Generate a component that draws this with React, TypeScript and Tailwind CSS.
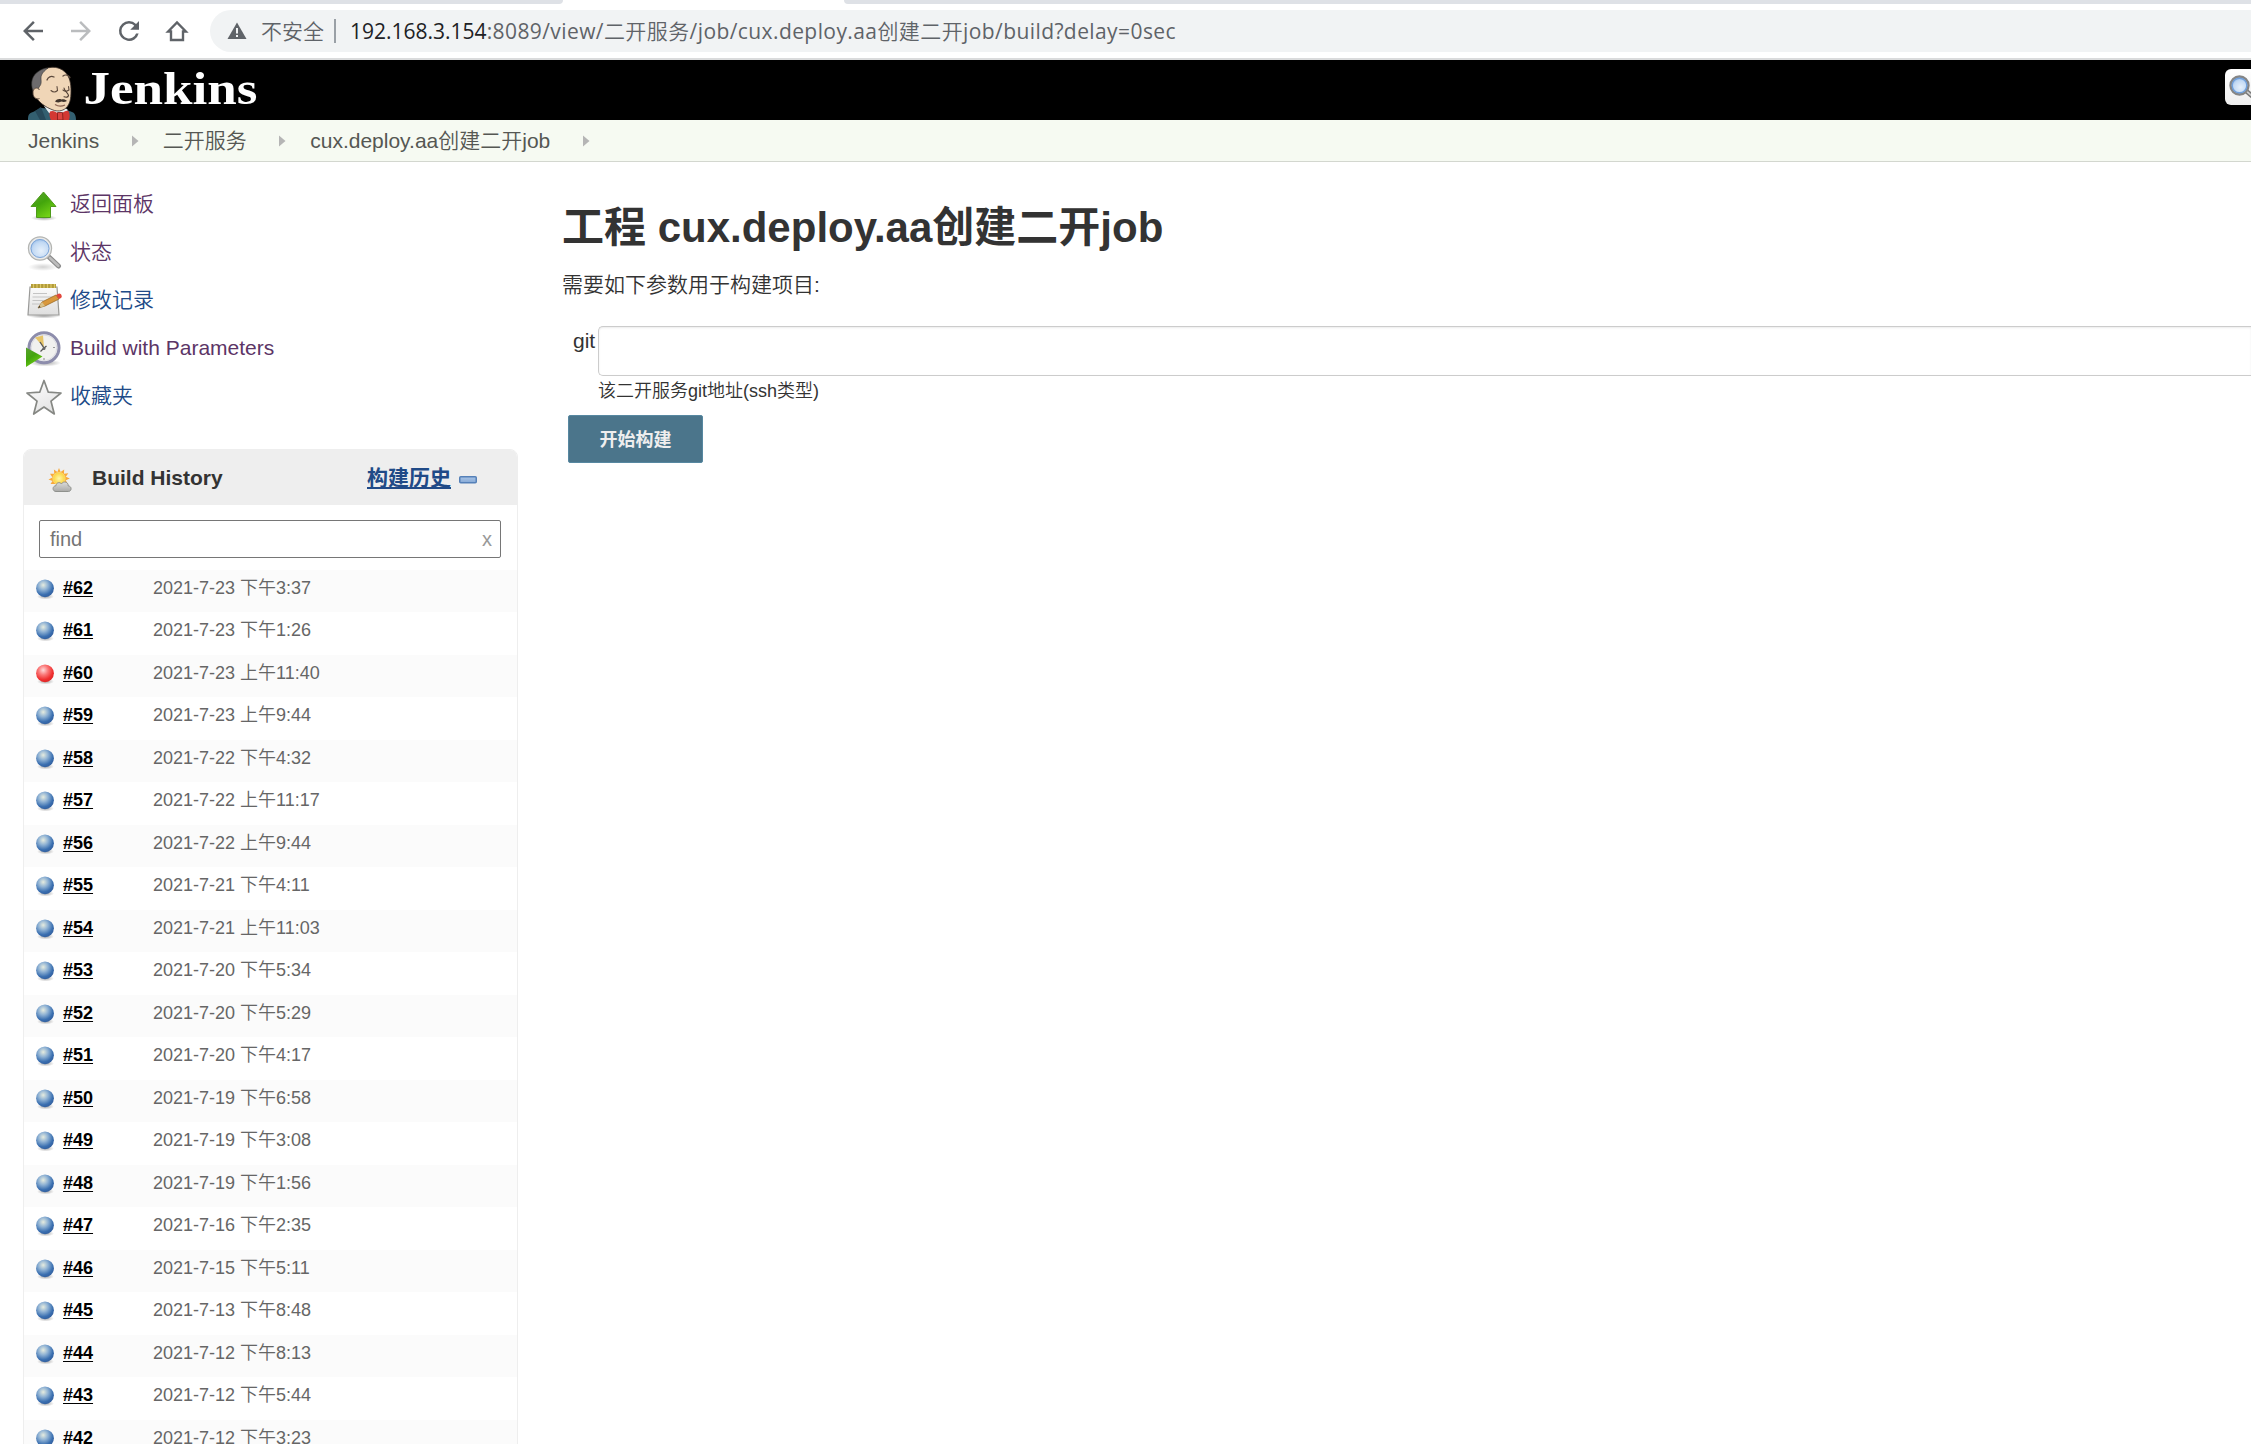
import type { ReactNode } from "react";

const CJK_SANS = "font-['Liberation_Sans','Noto_Sans_CJK_SC',sans-serif]";

type Build = { id: number; time: string; failed?: boolean };

const builds: Build[] = [
  { id: 62, time: "2021-7-23 下午3:37" },
  { id: 61, time: "2021-7-23 下午1:26" },
  { id: 60, time: "2021-7-23 上午11:40", failed: true },
  { id: 59, time: "2021-7-23 上午9:44" },
  { id: 58, time: "2021-7-22 下午4:32" },
  { id: 57, time: "2021-7-22 上午11:17" },
  { id: 56, time: "2021-7-22 上午9:44" },
  { id: 55, time: "2021-7-21 下午4:11" },
  { id: 54, time: "2021-7-21 上午11:03" },
  { id: 53, time: "2021-7-20 下午5:34" },
  { id: 52, time: "2021-7-20 下午5:29" },
  { id: 51, time: "2021-7-20 下午4:17" },
  { id: 50, time: "2021-7-19 下午6:58" },
  { id: 49, time: "2021-7-19 下午3:08" },
  { id: 48, time: "2021-7-19 下午1:56" },
  { id: 47, time: "2021-7-16 下午2:35" },
  { id: 46, time: "2021-7-15 下午5:11" },
  { id: 45, time: "2021-7-13 下午8:48" },
  { id: 44, time: "2021-7-12 下午8:13" },
  { id: 43, time: "2021-7-12 下午5:44" },
  { id: 42, time: "2021-7-12 下午3:23" },
];

/* Gradients shared by all icons */
function Gradients() {
  return (
    <svg className="absolute h-0 w-0" aria-hidden="true">
      <defs>
        <radialGradient id="ballBlue" cx="0.4" cy="0.32" r="0.68">
          <stop offset="0" stopColor="#e6ecdf" />
          <stop offset="0.4" stopColor="#8fb2d4" />
          <stop offset="0.8" stopColor="#3a6fb0" />
          <stop offset="1" stopColor="#3461a0" />
        </radialGradient>
        <radialGradient id="ballRed" cx="0.4" cy="0.32" r="0.68">
          <stop offset="0" stopColor="#ffd9d9" />
          <stop offset="0.4" stopColor="#fa7878" />
          <stop offset="0.8" stopColor="#ef2f2f" />
          <stop offset="1" stopColor="#e02828" />
        </radialGradient>
        <linearGradient id="green" x1="0" y1="0" x2="0.6" y2="1">
          <stop offset="0" stopColor="#5aa033" />
          <stop offset="0.5" stopColor="#43a50c" />
          <stop offset="1" stopColor="#73d216" />
        </linearGradient>
        <radialGradient id="lens" cx="0.55" cy="0.6" r="0.6">
          <stop offset="0" stopColor="#e6f0fb" />
          <stop offset="0.6" stopColor="#c3daf4" />
          <stop offset="1" stopColor="#8db5e6" />
        </radialGradient>
        <linearGradient id="paper" x1="0" y1="0" x2="0" y2="1">
          <stop offset="0" stopColor="#fbfbfb" />
          <stop offset="1" stopColor="#dedede" />
        </linearGradient>
        <linearGradient id="star" x1="0" y1="0" x2="0.5" y2="1">
          <stop offset="0" stopColor="#ffffff" />
          <stop offset="1" stopColor="#e4e4e4" />
        </linearGradient>
        <radialGradient id="shade">
          <stop offset="0" stopColor="#000" stopOpacity="0.35" />
          <stop offset="1" stopColor="#000" stopOpacity="0" />
        </radialGradient>
        <radialGradient id="sun">
          <stop offset="0" stopColor="#fff6a5" />
          <stop offset="1" stopColor="#fbd23c" />
        </radialGradient>
        <linearGradient id="cloud" x1="0" y1="0" x2="0" y2="1">
          <stop offset="0" stopColor="#dcdcda" />
          <stop offset="1" stopColor="#a9a9a7" />
        </linearGradient>
        <linearGradient id="minus" x1="0" y1="0" x2="0" y2="1">
          <stop offset="0" stopColor="#a9c4e6" />
          <stop offset="1" stopColor="#86a9d6" />
        </linearGradient>
      </defs>
    </svg>
  );
}

function NavIcon({ color, children }: { color: string; children: ReactNode }) {
  return (
    <svg viewBox="0 0 24 24" className="h-[30px] w-[30px] shrink-0" fill={color}>
      {children}
    </svg>
  );
}

function BrowserBar() {
  return (
    <div className="h-[60px] border-b-2 border-[#dadbdc] bg-white">
      <div className="flex h-1 justify-between">
        <div className="w-[563px] rounded-br-[4px] bg-[#dee1e6]" />
        <div className="w-[1407px] rounded-bl-[4px] bg-[#dee1e6]" />
      </div>
      <div className="flex items-center gap-[18px] pt-[6px] pl-[18px]">
        <NavIcon color="#5f6368">
          <path d="M20 11H7.83l5.59-5.59L12 4l-8 8 8 8 1.41-1.41L7.83 13H20v-2z" />
        </NavIcon>
        <NavIcon color="#babcbe">
          <path d="M12 4l-1.41 1.41L16.17 11H4v2h12.17l-5.58 5.59L12 20l8-8z" />
        </NavIcon>
        <NavIcon color="#5f6368">
          <path d="M17.65 6.35A7.96 7.96 0 0 0 12 4a8 8 0 1 0 7.73 10h-2.08A6 6 0 1 1 12 6c1.66 0 3.14.69 4.22 1.78L13 11h7V4l-2.35 2.35z" />
        </NavIcon>
        <NavIcon color="none">
          <path d="M4.9 12.4 12 5.2l7.1 7.2h-2.3v6.8H7.2v-6.8z" stroke="#5f6368" strokeWidth="1.9" />
        </NavIcon>
        <div className="flex h-[42px] flex-1 items-center rounded-l-full bg-[#f1f3f4] pl-[17px] font-['Open_Sans','Noto_Sans_CJK_SC',sans-serif] text-[21px] leading-[42px] font-normal whitespace-nowrap text-[#5f6368]">
          <svg viewBox="0 0 20 18" className="h-[18px] w-5 shrink-0">
            <path d="M10 0.5 19.5 17H0.5z" fill="#5f6368" />
            <path d="M9 6h2v5.5H9zM9 13h2v2H9z" fill="#f1f3f4" />
          </svg>
          <span className="ml-[14px] font-[350]">不安全</span>
          <div className="mr-[14px] ml-[10px] h-6 w-[2px] bg-[#9aa0a6]" />
          <span className="text-[#202124]">192.168.3.154</span>
          <span className="tracking-[0.41px]">
            :8089/view/<span className="font-[350]">二开服务</span>/job/cux.deploy.aa
            <span className="font-[350]">创建二开</span>job/build?delay=0sec
          </span>
        </div>
      </div>
    </div>
  );
}

function Butler() {
  return (
    <svg viewBox="0 0 50 54" className="h-[54px] w-[50px]">
      <path d="M0 54c0-5 1-7 5-8l8-4 26 2 5 2c3 1 4 4 4 8z" fill="#335f70" />
      <path d="M13 41l5 13h-6l-5-9z" fill="#27495a" />
      <path d="M16 40l5 7 12 3 7-6-5-4z" fill="#e9edf0" />
      <path d="M7 29C4 21 4 13 10 7c8-7 20-8 27-1 5 5 6 12 6 19 0 8-1 13-5 17-4 3.5-9 3.5-13 2-8-3-15-8-18-15z" fill="#f0d6b7" stroke="#3a2e27" strokeWidth="0.8" />
      <path d="M5 25C2 17 4 9 11 5c3-2 6-3 9-3-4 3-7 6-7 10 0 3 1 6-2 9l-1 4z" fill="#6d6b6d" stroke="#333" strokeWidth="0.6" />
      <path d="M11.5 24c-2-3.5-7-2-6.5 3 0 4 3 7 6.5 5.5" fill="#f0d6b7" stroke="#5a463a" strokeWidth="0.9" />
      <path d="M19 14c1-3 4-4.5 7-3M35 10c2-1.5 5-1 7 1.5" fill="none" stroke="#5d4a3d" strokeWidth="1.3" strokeLinecap="round" />
      <path d="M23 24.5c2 1.8 4.5 1.8 6.5 0l-.5-4M35 24c1.5 1.5 4 1.5 6 0l-.5-3.5" fill="none" stroke="#5d4a3d" strokeWidth="1.1" strokeLinecap="round" />
      <path d="M36 22c.5 3 4 5 4.5 7.5-.5 2-2.5 2-4.5 1.3" fill="none" stroke="#4f3d32" strokeWidth="1.1" strokeLinecap="round" />
      <path d="M27 35.5c2-2.5 4-3 6.5-2 2-.5 4 0 5.5 1.5-2 1.2-4 1.2-5.5.6-2 1.2-4.5 1-6.5-.1z" fill="#40342c" />
      <path d="M27 38.5c3 2 7 2 10 .5" fill="none" stroke="#8c6453" strokeWidth="1.2" />
      <path d="M22 45.5c3-1.5 6 .5 8 2h4c2-2 4-3 6.5-2.5 1.5 3 1.5 6 .5 9H23c-1.5-2.5-2-6-1-8.5z" fill="#d33833" />
      <path d="M29.5 46.5h5l.5 7.5h-5.5z" fill="#dd4440" stroke="#7e1c19" strokeWidth="0.8" />
    </svg>
  );
}

function SearchIcon({ className }: { className: string }) {
  return (
    <svg viewBox="0 0 36 36" className={className}>
      <ellipse cx="17" cy="32" rx="15" ry="4" fill="url(#shade)" opacity="0.5" />
      <path d="M23.5 22.5l9 8.5" stroke="#8c8c8c" strokeWidth="5" strokeLinecap="round" />
      <path d="M24 23l8.3 7.8" stroke="#bdbdbd" strokeWidth="2.6" strokeLinecap="round" />
      <circle cx="14" cy="13.5" r="11.4" fill="url(#lens)" stroke="#b4b5b2" strokeWidth="1.6" />
      <circle cx="14" cy="13.5" r="10.2" fill="none" stroke="#e9e9e8" strokeWidth="1.6" />
      <circle cx="14" cy="13.5" r="9" fill="none" stroke="#7fa6d8" strokeWidth="1" />
    </svg>
  );
}

function Header() {
  return (
    <header className="flex h-[60px] items-start justify-between bg-black">
      <div className="flex pt-[6px] pl-[28px]">
        <Butler />
        <svg viewBox="0 0 180 54" className="ml-[5px] h-[54px] w-[180px]">
          <text x="0.5" y="37.5" fontSize="45.5" fontWeight="700" textLength="174" lengthAdjust="spacingAndGlyphs" fill="#fff" fontFamily="'Liberation Serif', serif">
            Jenkins
          </text>
        </svg>
      </div>
      <div className="mt-[9px] flex h-9 w-[26px] items-center overflow-hidden rounded-l-[6px] bg-gradient-to-b from-white to-[#eeeeee] pl-1">
        <svg viewBox="0 0 24 24" className="h-6 w-6 shrink-0">
          <path d="M16 15l7 6" stroke="#777" strokeWidth="4.6" strokeLinecap="round" />
          <path d="M17.5 16.3l6 5" stroke="#ccc" strokeWidth="1.8" />
          <circle cx="10.5" cy="10.5" r="9" fill="url(#lens)" stroke="#858585" strokeWidth="2.4" />
          <circle cx="10.5" cy="10.5" r="7.3" fill="none" stroke="#6f9fdb" strokeWidth="1.4" />
        </svg>
      </div>
    </header>
  );
}

function Breadcrumbs() {
  return (
    <nav className="flex h-[42px] items-center border-b border-[#d3d7cf] bg-[#f6faf2] pl-7 text-[21px] leading-[42px] whitespace-nowrap">
      {["Jenkins", "二开服务", "cux.deploy.aa创建二开job"].map((label) => (
        <div key={label} className="flex items-center">
          <a className="text-[#555753]">{label}</a>
          <svg viewBox="0 0 7 12" className="mr-[24px] ml-[32.5px] h-3 w-[7px]">
            <path d="M0 0.5L6.5 6L0 11.5z" fill="#b5b5b5" />
          </svg>
        </div>
      ))}
    </nav>
  );
}

function UpIcon() {
  return (
    <svg viewBox="0 0 36 36" className="h-9 w-9">
      <ellipse cx="18" cy="31" rx="13" ry="3" fill="url(#shade)" />
      <path d="M17.5 5L30 19.5h-5.5V30.5h-14V19.5H5z" fill="url(#green)" stroke="#4e9a1a" strokeWidth="1" />
    </svg>
  );
}

function NotepadIcon() {
  return (
    <svg viewBox="0 0 36 36" className="h-9 w-9">
      <ellipse cx="18" cy="33" rx="17" ry="2.5" fill="url(#shade)" />
      <path d="M4 4h27l2 28H2z" fill="url(#paper)" stroke="#9a9a98" strokeWidth="1.2" />
      <path d="M5 1h25v4H5z" fill="#b29b3a" />
      <path d="M7.5 1v4M11 1v4M14.5 1v4M18 1v4M21.5 1v4M25 1v4M28.5 1v4" stroke="#dcc968" strokeWidth="1.2" />
      <path d="M7 10.5h14M6.5 14h20M6.5 17.5h11M6 21h8" stroke="#c4c4c4" strokeWidth="1.2" />
      <path d="M12 25l4-6 14-7 3 4-14 7z" fill="#d9983c" stroke="#9b6a24" strokeWidth="0.8" />
      <path d="M12 25l4-6 3 4z" fill="#d8c28c" />
      <path d="M12 25l1.5-2.2 1 1.4z" fill="#333" />
      <path d="M30 12l3-1.5c2.5 0 3.5 3 2 4.5l-2 1z" fill="#e2473c" />
    </svg>
  );
}

function ClockIcon() {
  return (
    <svg viewBox="0 0 36 36" className="h-9 w-9">
      <ellipse cx="19" cy="32" rx="16" ry="3.5" fill="url(#shade)" />
      <circle cx="18" cy="16.8" r="15" fill="#f1f1ef" stroke="#8d8dac" strokeWidth="3" />
      <circle cx="18" cy="16.8" r="12.8" fill="none" stroke="#d5d5de" strokeWidth="0.8" />
      <path d="M9 6.5l8-2 1 12z" fill="#e6c468" />
      <path d="M14 11l4 6 2.5-2M18 17l-3.5 3.5" fill="none" stroke="#555" strokeWidth="1.3" />
      <circle cx="18" cy="17.5" r="1.5" fill="#666" />
      <path d="M27 16.5h2M18 27v2" stroke="#999" strokeWidth="1.2" />
      <path d="M0 16.5L16.5 25.5L0 36z" fill="url(#green)" />
    </svg>
  );
}

function StarIcon() {
  return (
    <svg viewBox="0 0 36 36" className="h-9 w-9">
      <path
        d="M18 1.5l4.3 11.7 12.7.8-10 8.2 3.3 12.8L18 28l-10.3 7 3.3-12.8L1 14l12.7-.8z"
        fill="url(#star)"
        stroke="#868884"
        strokeWidth="1.7"
        strokeLinejoin="round"
      />
    </svg>
  );
}

function WeatherIcon() {
  return (
    <svg viewBox="0 0 24 24" className="h-6 w-6">
      <path d="M11 0l1.6 4 3.6-2.6-.3 4.3 4.4-.5-2.5 3.6 4 1.7-4 1.8 2 3.7H2.5L4.5 13 .5 11.5l4-1.9L2 5.7l4.3.1L5.9 1.5l3.5 2.6z" fill="#f8a93a" />
      <circle cx="11" cy="10.5" r="6.2" fill="url(#sun)" stroke="#fbe08a" strokeWidth="0.6" />
      <path d="M8 23.5c-3.8 0-4-5.6 0-5.8 0-3.2 4-4 5.4-1.8 2-3.3 7.2-2 6.8 2 4 .2 3.6 5.6.2 5.6z" fill="url(#cloud)" stroke="#8f918d" strokeWidth="1" />
    </svg>
  );
}

function Ball({ failed }: { failed?: boolean }) {
  return (
    <svg viewBox="0 0 20 22" className="h-[22px] w-5">
      <ellipse cx="9.5" cy="18.5" rx="8.5" ry="3" fill="url(#shade)" />
      <circle cx="9" cy="10.3" r="8.9" fill={failed ? "url(#ballRed)" : "url(#ballBlue)"} />
    </svg>
  );
}

const tasks: { label: string; icon: ReactNode; visited?: boolean }[] = [
  { label: "返回面板", icon: <UpIcon />, visited: true },
  { label: "状态", icon: <SearchIcon className="h-9 w-9" />, visited: true },
  { label: "修改记录", icon: <NotepadIcon /> },
  { label: "Build with Parameters", icon: <ClockIcon />, visited: true },
  { label: "收藏夹", icon: <StarIcon /> },
];

function BuildHistory() {
  return (
    <section className="ml-[23px] w-[495px] rounded-t-[8px] border border-[#eeeeee] bg-white">
      <div className="flex h-[55px] items-center rounded-t-[7px] bg-[#eeeeee] pl-6 text-[21px] leading-[55px] font-bold text-[#333]">
        <div className="mt-[5px]">
          <WeatherIcon />
        </div>
        <span className="ml-5 w-[275px]">Build History</span>
        <a className="text-[#204a87] underline decoration-2 underline-offset-2">构建历史</a>
        <svg viewBox="0 0 18 8" className="mt-[5px] ml-2 h-2 w-[18px]">
          <rect x="0.75" y="0.75" width="16.5" height="6" rx="1" fill="url(#minus)" stroke="#5580b8" strokeWidth="1.5" />
        </svg>
      </div>
      <div className="pt-[15px] pr-4 pb-3 pl-[15px]">
        <div className="flex h-[38px] items-center justify-between rounded-[2px] border border-[#767676] pr-2 pl-[10px] text-[20px] leading-9 text-[#757575]">
          <span>find</span>
          <span className="text-[#999]">x</span>
        </div>
      </div>
      <div>
        {builds.map((b) => (
          <div
            key={b.id}
            className="flex h-[43px] items-start pl-3 text-[18px] leading-[37px] odd:h-[42px] odd:bg-[#fbfbfb]"
          >
            <div className="mt-2 w-[27px]">
              <Ball failed={b.failed} />
            </div>
            <a className="w-[90px] font-bold text-black underline decoration-1 underline-offset-2">#{b.id}</a>
            <span className="text-[#666]">{b.time}</span>
          </div>
        ))}
      </div>
    </section>
  );
}

function Sidebar() {
  return (
    <aside className="w-[562px] shrink-0 pt-[18px]">
      <ul className="mb-[29px] pl-[26px]">
        {tasks.map((t) => (
          <li key={t.label} className="flex h-12 items-center gap-2 text-[21px] leading-[44px]">
            <span className="mt-px">{t.icon}</span>
            <a className={t.visited ? "text-[#5c3566]" : "text-[#204a87]"}>{t.label}</a>
          </li>
        ))}
      </ul>
      <BuildHistory />
    </aside>
  );
}

function BuildForm() {
  return (
    <main className="flex-1 overflow-hidden pt-[39px] text-[#333]">
      <h1 className="text-[42px] leading-[54px] font-bold whitespace-nowrap">工程 cux.deploy.aa创建二开job</h1>
      <p className="mt-[13px] text-[21px] leading-[34px]">需要如下参数用于构建项目:</p>
      <div className="mt-6 flex pl-[11px]">
        <label className="w-[25px] text-[21px] leading-[30px]">git</label>
        <div className="flex-1">
          <div className="h-[50px] rounded-l-[5px] border border-r-0 border-[#ccc] bg-white shadow-[inset_0_1px_2px_rgba(0,0,0,0.08)]" />
          <div className="mt-px text-[18px] leading-7">该二开服务git地址(ssh类型)</div>
        </div>
      </div>
      <button className="mt-[10px] ml-[6px] block h-12 w-[135px] rounded-[2px] border border-[#5788a1] bg-[#4b758b] pt-px text-[18px] leading-[46px] font-bold text-[#eee]">
        开始构建
      </button>
    </main>
  );
}

export default function App() {
  return (
    <div className={`${CJK_SANS} h-[1444px] overflow-hidden bg-white font-[350]`}>
      <Gradients />
      <BrowserBar />
      <Header />
      <Breadcrumbs />
      <div className="flex">
        <Sidebar />
        <BuildForm />
      </div>
    </div>
  );
}
